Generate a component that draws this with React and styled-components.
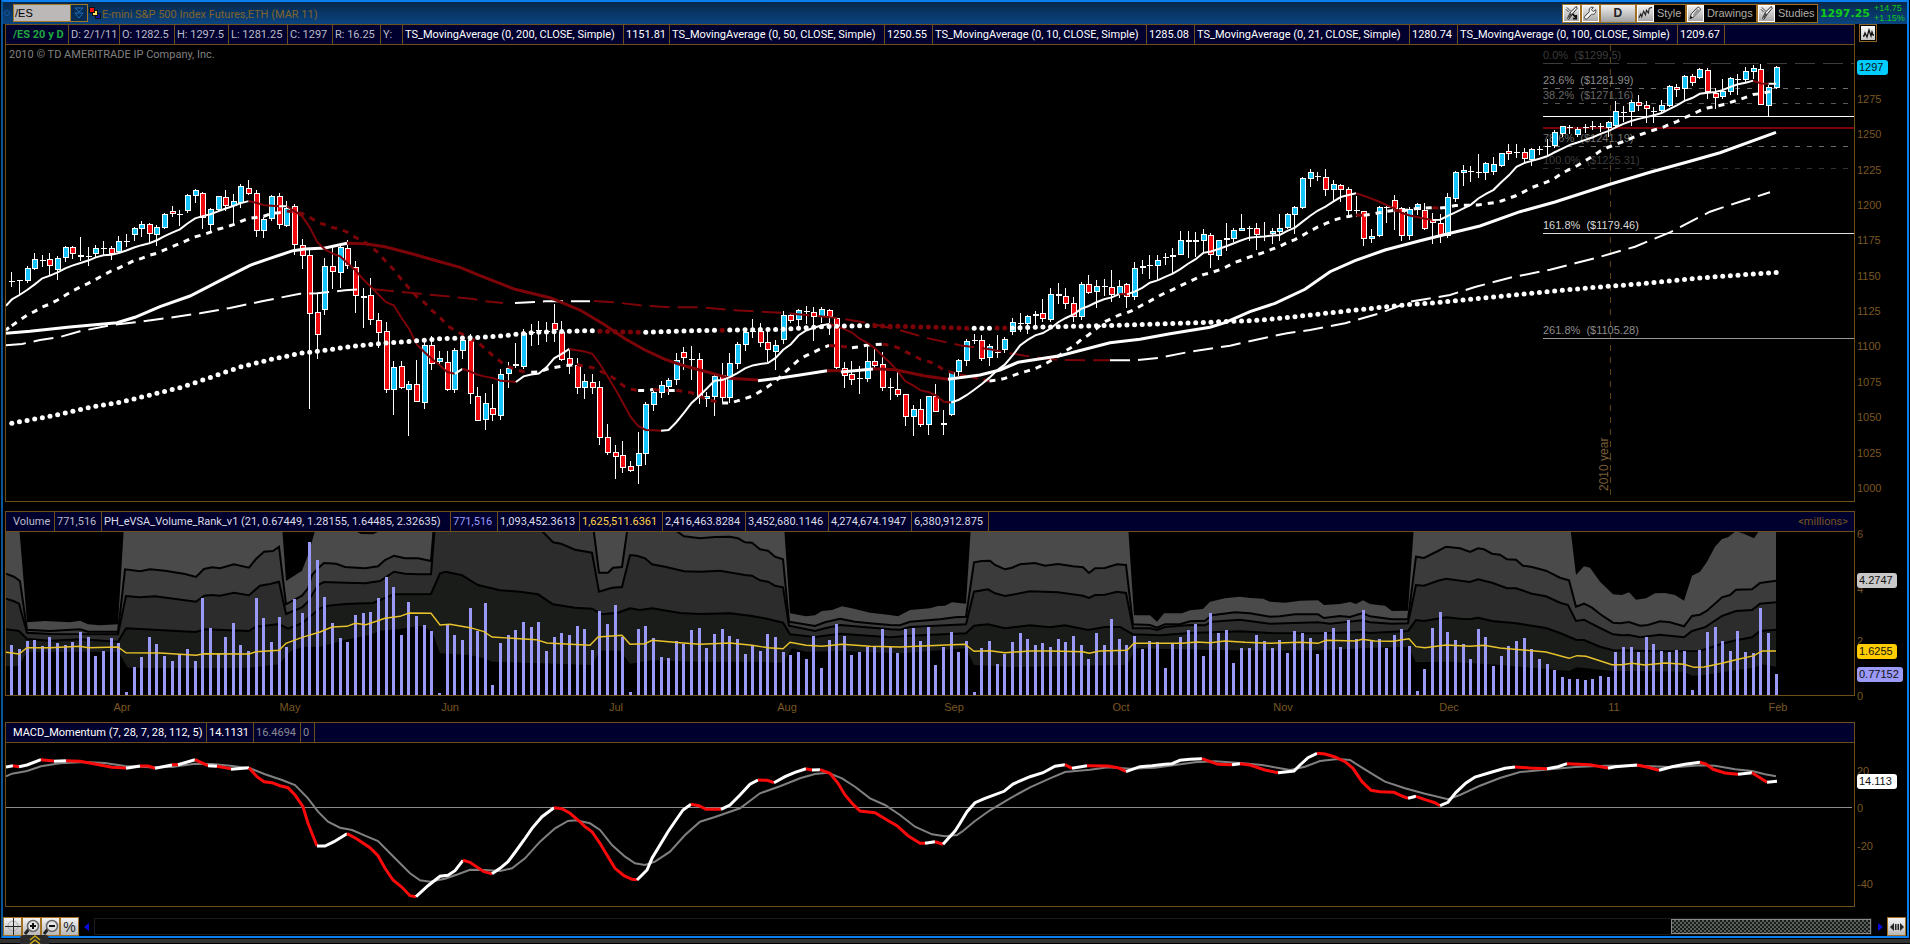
import styled, { createGlobalStyle } from "styled-components";

// bar geometry shared by the three panes
const FIRST_BAR = 11.8;
const BAR_STEP = 7.638;
const barX = (i) => FIRST_BAR + i * BAR_STEP;

// "dir high top bottom low", in thirds of a unit counted from base
const parseCandles = (base, text) =>
  text
    .trim()
    .split(/\s*,\s*/)
    .map((row) => {
      const [dir, ...v] = row.split(" ");
      const [high, top, bottom, low] = v.map((n) => (Number(n) + base) / 3);
      return { up: dir === "u", high, top, bottom, low };
    });

const candles = [
  ...parseCandles(
    480,
    `u 336 362 363 380,u 361 361 363 405,u 318 325 364 370,u 279 297 326 330,u 285 299 301 320,
d 279 298 319 345,u 289 294 331 359,u 258 262 295 306,d 258 262 282 297,d 231 284 291 302,
u 262 287 292 318,u 255 265 283 290,u 243 264 266 284,d 258 265 281 299,u 228 243 275 283,
u 222 244 247 262,u 201 205 224 242,u 183 193 206 231,d 189 193 223 246,u 195 202 224 257,
u 160 163 203 207,d 138 154 162 172,u 151 163 165 197,u 102 106 152 158,u 87 91 107 129,
d 97 100 175 207,u 145 148 194 216,u 108 109 151 156,d 90 112 137 154,u 102 124 137 193,
u 72 79 128 143,d 60 85 101 104,d 91 99 214 230,u 172 176 213 234,u 105 109 176 183,
d 99 109 194 207,u 124 145 199 201,d 133 139 254 285,d 237 255 287 327,d 271 286 461 747,
d 403 457 526 597,u 295 319 451 466,d 261 319 337 387,u 252 261 338 384,d 240 265 318 328,
d 304 321 407 459,u 383 408 415 503,d 354 405 481 494,d 460 481 518 564,d 486 514 689 699,
u 604 622 689 765,d 603 619 683 686,u 662 673 689 828,d 600 673 725 725,u 537 556 728 746,
d 528 556 611 630,u 574 595 607 612,d 574 607 689 693,u 564 571 689 700,u 520 539 572 597,
d 522 541 701 732,d 682 709 782 782`
  ),
  ...parseCandles(
    780,
    `u 398 430 479 510,d 372 445 464 482,u 327 343 467 480,u 306 324 343 384,d 249 311 317 325,
u 208 219 320 327,u 192 217 220 258,u 183 211 214 255,u 186 213 214 247,d 132 190 211 246,
d 183 217 299 303,d 268 295 314 342,d 295 314 383 402,u 341 363 384 417,d 343 366 383 402,
d 364 382 533 555,d 492 532 578 585,d 555 577 591 657,d 543 586 623 639,d 603 619 632 636,
u 516 580 619 672,u 425 431 581 615,u 391 396 434 452,u 362 376 398 414,u 353 359 380 405,
u 279 301 360 375,d 261 277 294 330,u 258 296 298 361,d 280 297 412 431,u 396 409 416 441,
u 344 347 411 467,d 310 344 413 425,u 279 308 413 430,u 247 253 311 326,u 213 217 254 272,
u 177 214 217 234,d 189 213 248 261,d 211 247 271 305,u 241 256 275 330,u 153 166 239 251,
d 159 166 182 188,u 146 150 181 209,d 138 153 156 191,d 141 156 172 243,u 141 148 172 190,
d 146 150 172 224,d 171 175 323 327,d 307 323 347 384,d 303 343 359 375,u 319 353 354 402,
u 253 304 356 366,d 261 304 317 325,d 276 313 383 393,u 355 380 383 420,d 336 386 404 412,
d 401 403 470 498,u 435 447 470 528,d 417 448 494 501,u 407 409 496 525,d 372 409 455 455,
d 450 490 496 525,u 332 337 464 468,u 296 300 337 348,u 237 244 302 318,u 222 239 241 252,
d 225 241 297 303,u 252 258 294 318,u 225 276 279 294`
  ),
  ...parseCandles(
    390,
    `u 621 628 659 668,u 564 577 606 615,u 550 580 583 606,u 555 558 581 612,u 543 553 558 587,
d 507 549 566 575,u 474 493 569 575,d 459 493 498 521,d 474 498 521 536,d 501 520 560 575,
u 457 462 560 570,d 435 461 488 492,u 450 468 487 534,u 447 469 472 498,d 420 472 496 515,
u 450 468 494 504,d 459 462 501 534,u 396 415 500 511,u 390 408 415 431,u 375 406 409 447,
u 375 391 407 450,u 369 382 385 405,u 354 374 382 429,u 303 331 374 375,d 303 331 337 384,
u 306 330 335 382,u 297 312 332 365,d 309 315 376 414,u 329 329 377 391,u 279 324 330 363,
u 294 301 328 336,u 252 295 303 304,u 288 295 297 334,d 279 295 314 360,u 276 317 319 334,
u 294 303 313 342,u 252 294 305 334,u 249 253 295 297,u 228 232 255 312,u 140 145 233 237,
u 117 126 147 171,u 126 137 139 154,d 117 142 179 198,u 150 163 180 214,d 163 166 179 217,
d 172 178 244 258,u 198 241 244 260,d 243 244 328 348,u 297 317 326 340,u 228 232 318 320,
u 229 232 235 279,d 195 210 236 300,d 232 235 318 333,u 231 238 318 330,u 219 223 239 256,
d 219 241 297 300,d 249 270 280 342,d 252 280 318 340,u 190 202 318 325,u 123 125 206 216,
u 105 120 128 168,u 109 124 126 156,u 72 127 130 143,u 96 100 128 150,u 81 102 125 134,
u 69 70 108 111,d 42 64 71 91,u 42 67 69 83,d 54 67 87 99,u 55 58 90 107,
u 48 58 61 76,u 27 49 52 82`
  ),
  ...parseCandles(
    0,
    `u 390 396 439 445,u 377 379 402 411,u 375 382 385 403,u 382 387 404 412,u 373 382 384 400,
u 363 378 382 390,u 370 378 380 396,u 364 367 383 411,u 303 334 379 384,u 318 335 338 366,
u 300 307 336 378,d 285 307 317 333,d 303 316 328 369,u 322 332 335 369,u 300 316 334 340,
u 255 258 317 321,d 252 260 269 291,u 226 229 268 306,d 222 229 250 259,u 205 207 233 237,
d 204 210 276 297,d 264 279 293 327,u 237 273 290 298,u 231 234 275 286,u 222 238 241 286,
u 201 213 241 250,u 195 205 215 238,d 193 208 314 315,u 255 261 318 349,u 198 202 264 268`
  ),
];

const closes = candles.map((c) => (c.up ? c.top : c.bottom));

// lead values stand in for the bars before the visible range
const movingAverage = (length, lead) =>
  closes.map((_, i) => {
    if (i < lead.length) return (lead[i] + 480) / 3;
    const window = closes.slice(i - length + 1, i + 1);
    return window.reduce((a, b) => a + b, 0) / length;
  });

const colourRuns = (values) => {
  const runs = [];
  for (let i = 1; i < values.length; i++) {
    const falling = values[i] > values[i - 1] + 0.05;
    const last = runs[runs.length - 1];
    const point = [barX(i), values[i]];
    if (last && last.falling === falling) last.points.push(point);
    else runs.push({ falling, points: [[barX(i - 1), values[i - 1]], point] });
  }
  return runs;
};

const sma10 = movingAverage(10, [418, 405, 390, 373, 355, 347, 337, 325, 316]);
const sma21 = movingAverage(
  21,
  [497, 481, 466, 454, 441, 432, 420, 406, 392, 381, 370, 358, 345, 333, 324, 313, 302, 295, 286, 280]
);

// x in units, y in thirds
const sma50 = [
  [false, "6,1000 30,994 70,981 117,968 135,952 160,920 190,888 220,842 250,796 270,775 293,752 305,747 325,744 347,730"],
  [true, "347,730 365,731 385,740 410,760 440,785 460,802 480,827 515,868 550,893 580,930 605,975 625,1016 645,1050 665,1078 685,1098 710,1118 730,1135 758,1140"],
  [false, "758,1142 780,1134 800,1125 827,1112"],
  [true, "827,1112 841,1112"],
  [false, "841,1116 873,1107"],
  [true, "873,1106 895,1109 925,1128 948,1138"],
  [false, "948,1138 980,1125 1000,1110 1018,1087 1060,1067 1110,1028 1140,1018 1170,1001 1210,982 1225,968 1250,935 1275,910 1305,868 1330,815 1355,782 1385,750 1420,722 1450,700 1480,678 1520,635 1555,606 1610,553 1650,517 1690,484 1720,458 1776,397"],
];

const sma100 = [
  [false, "6,1036 22,1032 40,1020 60,1011 80,994 110,976 140,965 170,953 200,940 230,924 262,904 300,881 317,880 345,871 363,867"],
  [true, "374,868 420,881 474,897 480,902 503,909"],
  [false, "515,909 530,907 545,904 590,904"],
  [true, "594,903 615,907 640,916 670,922 700,922 730,930 780,938 810,946 840,955 870,970 900,991 930,1016 960,1036 990,1048 1010,1060 1035,1072 1060,1080 1110,1081"],
  [false, "1110,1081 1135,1081 1160,1073 1190,1055 1230,1037 1270,1010 1287,1000 1310,990 1345,970 1380,940 1410,905 1450,885 1475,861 1510,833 1550,809 1575,790 1595,775 1635,740 1670,697 1710,635 1740,605 1770,577"],
];

const sma200 = [
  [11, 1270], [30, 1260], [60, 1243], [90, 1222], [120, 1207], [150, 1185], [180, 1163], [210, 1133],
  [240, 1101], [270, 1079], [300, 1060], [320, 1053], [350, 1040], [385, 1029], [415, 1023], [440, 1016],
  [477, 1013], [505, 1007], [530, 998], [550, 996], [590, 992], [610, 995], [645, 997], [690, 992],
  [780, 988], [830, 979], [865, 977], [900, 979], [974, 985], [1010, 984], [1060, 980], [1130, 975],
  [1180, 970], [1250, 962], [1270, 958], [1310, 945], [1350, 932], [1400, 916], [1440, 907],
  [1500, 889], [1550, 874], [1600, 861], [1650, 849], [1700, 834], [1740, 825], [1778, 817],
];
const fallingSpans = [[596, 642], [718, 726], [870, 971], [992, 1008]];

const interpolate = (points, x) => {
  const k = Math.max(1, points.findIndex((p) => p[0] >= x));
  const [x0, y0] = points[k - 1];
  const [x1, y1] = points[k];
  return y0 + ((y1 - y0) * (x - x0)) / (x1 - x0);
};

const toPath = (text, base, step = 3) =>
  text
    .trim()
    .split(/\s+/)
    .map((pair) => {
      const [x, y] = pair.split(",").map(Number);
      return `${x},${(base + y / step).toFixed(1)}`;
    })
    .join(" ");

const volumes = [
  420, 432, 408, 405, 423, 396, 414, 420, 411, 381, 396, 453, 438, 399, 414, 561, 486, 456, 396, 417, 453, 468,
  447, 432, 468, 279, 369, 447, 396, 354, 420, 438, 279, 339, 411, 336, 426, 282, 324, 111, 165, 276, 354, 399,
  411, 330, 324, 321, 279, 216, 246, 390, 291, 333, 360, 378, 565, 360, 390, 405, 309, 378, 294, 540, 414, 390,
  375, 351, 366, 351, 438, 396, 384, 390, 363, 372, 435, 318, 357, 300, 396, 561, 372, 363, 399, 456, 459, 408,
  417, 375, 369, 429, 387, 372, 393, 402, 447, 423, 438, 387, 396, 441, 450, 441, 462, 393, 489, 405, 357, 393,
  450, 441, 426, 426, 372, 423, 444, 372, 369, 408, 366, 480, 426, 381, 441, 408, 561, 429, 408, 477, 447, 411,
  384, 402, 420, 414, 426, 402, 411, 393, 420, 462, 384, 420, 342, 402, 420, 393, 432, 408, 411, 489, 417, 396,
  375, 357, 453, 324, 384, 375, 474, 429, 429, 390, 408, 429, 405, 444, 378, 384, 399, 447, 381, 369, 426, 345,
  402, 315, 408, 402, 429, 390, 372, 423, 558, 492, 369, 321, 381, 405, 417, 462, 372, 396, 483, 453, 423, 408,
  399, 432, 462, 477, 495, 516, 522, 522, 525, 522, 513, 516, 441, 426, 426, 441, 396, 417, 438, 441, 435, 438,
  555, 435, 381, 366, 408, 438, 378, 441, 444, 309, 384, 507,
];

const bands = [
  {
    fill: "#4a4a4a",
    points:
      "6,60 19,60 27,352 45,348 60,350 70,352 80,347 88,358 100,361 118,358 124,60 282,60 286,228 302,197 308,150 315,78 355,78 361,87 373,88 380,78 784,60 790,325 806,334 815,331 822,318 832,315 842,304 855,312 870,323 890,330 898,334 910,315 930,310 938,303 945,302 952,292 966,296 971,60 1128,60 1134,331 1150,331 1157,350 1164,325 1182,325 1190,316 1203,312 1210,290 1225,280 1240,275 1250,279 1263,281 1270,290 1285,293 1300,287 1318,286 1324,300 1340,297 1350,291 1356,297 1363,286 1370,297 1385,302 1392,318 1408,317 1414,60 1570,60 1576,210 1584,184 1590,188 1600,230 1613,268 1622,270 1629,262 1636,284 1646,280 1655,265 1665,264 1675,270 1684,287 1692,212 1700,200 1707,170 1715,125 1722,102 1728,97 1736,78 1745,88 1754,100 1759,78 1776,60",
  },
  {
    fill: "#3a3b3a",
    line: true,
    points:
      "6,206 14,215 20,228 27,374 50,378 80,373 88,380 118,380 125,193 140,199 150,193 165,197 185,207 196,216 204,192 212,187 220,190 234,178 249,188 256,162 264,140 273,138 279,125 286,298 302,272 308,250 312,210 318,190 324,174 336,176 345,186 365,190 378,184 385,165 394,152 405,160 418,160 431,168 434,60 593,60 599,203 608,203 613,188 622,186 628,60 668,60 684,94 700,100 715,96 730,95 738,100 745,112 752,113 760,133 768,137 775,155 783,163 789,350 815,363 825,352 840,341 855,350 870,355 890,360 900,361 910,350 940,343 955,337 966,335 974,172 982,168 990,167 995,180 1005,193 1012,188 1020,178 1035,174 1045,182 1058,177 1073,184 1083,187 1089,204 1095,190 1105,189 1117,178 1126,180 1133,358 1150,360 1157,368 1165,358 1180,358 1190,349 1205,347 1212,331 1235,322 1250,325 1270,335 1280,334 1295,328 1318,328 1324,339 1340,333 1350,336 1362,325 1370,334 1392,343 1408,343 1416,155 1424,159 1438,138 1446,125 1460,130 1470,141 1478,130 1484,133 1492,146 1500,149 1507,163 1516,164 1523,182 1532,186 1546,197 1560,218 1569,226 1576,305 1584,296 1592,308 1600,327 1613,353 1620,355 1629,351 1640,362 1648,360 1660,349 1670,352 1684,364 1692,333 1700,329 1707,317 1722,277 1730,270 1736,254 1752,253 1760,234 1776,227",
  },
  {
    fill: "#2b2c2b",
    line: true,
    points:
      "6,281 14,289 19,296 27,383 50,387 118,388 126,273 140,277 155,274 170,280 196,290 204,272 212,270 220,272 234,263 249,271 260,242 270,237 279,230 286,327 302,307 308,290 318,240 324,231 345,233 365,235 380,228 394,200 405,206 418,208 431,208 435,60 536,60 543,81 553,112 561,116 575,134 592,143 599,260 612,248 622,246 630,150 637,152 645,160 652,178 665,185 684,199 700,200 720,197 745,210 752,212 760,226 768,230 775,242 783,247 789,362 815,378 825,370 840,360 890,373 900,374 910,366 966,358 974,260 988,253 995,265 1005,273 1015,268 1030,259 1058,262 1083,272 1089,279 1095,270 1105,269 1117,260 1126,264 1133,370 1150,370 1157,375 1165,366 1190,360 1205,361 1212,350 1240,344 1270,356 1318,352 1330,356 1362,346 1370,352 1392,356 1408,355 1416,240 1424,242 1438,227 1446,221 1470,231 1478,223 1492,233 1507,250 1516,250 1532,266 1546,274 1560,293 1568,300 1576,348 1584,344 1600,369 1613,388 1622,391 1629,390 1640,397 1660,389 1684,397 1692,378 1705,367 1722,333 1736,318 1752,315 1760,296 1776,292",
  },
  {
    fill: "#191c19",
    line: true,
    points:
      "6,373 19,378 27,402 50,407 80,403 118,410 126,370 196,381 205,373 249,378 256,365 279,357 288,371 302,355 320,310 328,302 345,297 373,294 394,268 431,267 440,205 446,200 462,211 478,240 500,256 520,260 538,268 553,298 575,308 592,311 602,328 618,323 630,310 640,315 652,310 680,324 700,327 730,325 752,333 768,342 783,353 790,388 815,396 840,386 890,397 910,392 966,385 974,362 988,358 1005,370 1030,361 1050,367 1065,361 1088,375 1105,366 1120,366 1133,388 1160,391 1190,384 1212,382 1240,379 1270,384 1318,385 1340,383 1362,381 1370,384 1408,378 1416,345 1424,348 1446,337 1460,341 1470,343 1478,338 1492,348 1516,355 1546,369 1560,384 1576,404 1584,405 1600,425 1613,436 1660,439 1700,438 1722,416 1736,406 1752,397 1760,378 1776,374",
  },
  {
    fill: "#000",
    points:
      "6,484 19,484 27,440 118,440 128,488 200,490 249,488 279,478 290,440 302,425 320,425 345,405 370,390 380,377 400,372 420,362 432,378 440,445 470,450 484,460 492,470 540,475 592,480 600,437 620,437 630,476 652,466 700,470 750,470 783,473 792,430 806,440 840,438 900,445 966,430 974,480 1010,486 1088,482 1127,480 1136,430 1200,434 1270,437 1320,436 1362,430 1408,425 1416,472 1450,470 1500,480 1546,492 1569,498 1577,487 1612,498 1640,498 1684,500 1692,512 1705,510 1730,498 1754,488 1762,478 1776,485",
  },
];

const volumeAverage =
  "6,442 19,447 27,428 50,428 80,424 88,428 118,426 126,443 160,444 196,451 204,446 249,447 256,440 279,436 286,415 302,397 320,381 332,366 347,364 355,355 366,359 385,340 400,334 409,324 431,325 440,360 450,358 470,368 484,380 492,396 536,404 547,414 590,421 598,396 622,391 630,418 645,416 652,406 680,413 700,418 730,414 752,421 768,428 783,431 790,412 806,421 822,424 842,418 870,424 900,426 940,421 965,418 974,439 990,437 1005,443 1030,438 1050,438 1083,440 1089,445 1100,438 1127,436 1134,415 1182,415 1197,411 1210,413 1225,408 1245,412 1270,415 1300,412 1318,415 1326,406 1356,408 1362,403 1375,408 1393,409 1409,401 1416,425 1425,428 1446,420 1470,424 1484,421 1500,429 1520,434 1546,441 1569,460 1577,452 1586,454 1612,479 1622,479 1632,475 1645,480 1665,474 1684,478 1694,487 1704,486 1722,475 1736,464 1754,452 1762,438 1776,438";

// white while rising, red while falling
const macd = [
  ["w", "6,156 13,152"],
  ["r", "13,152 19,155"],
  ["w", "19,155 27,150 41,134"],
  ["r", "41,134 54,138"],
  ["w", "54,139 66,137"],
  ["r", "66,137 80,139 95,147 112,157 126,159"],
  ["w", "126,160 140,153"],
  ["r", "140,153 148,153 155,160"],
  ["w", "155,160 172,150"],
  ["r", "172,149 178,149"],
  ["w", "178,149 195,134"],
  ["r", "195,134 208,152"],
  ["w", "208,152 217,154"],
  ["r", "217,154 231,161"],
  ["w", "231,163 249,158"],
  ["r", "249,158 257,185 264,200 272,203 280,212 288,218 295,240 303,275 308,325 317,393"],
  ["w", "317,393 325,393 334,380 347,356"],
  ["r", "347,356 357,372 370,398 378,422 385,460 393,495 402,517 410,542 416,545"],
  ["w", "416,545 428,512 440,484 448,481 455,467 463,436"],
  ["r", "463,436 470,442 478,458 484,470 492,476"],
  ["w", "492,476 500,460 508,440 516,408 524,375 532,340 542,305 554,278"],
  ["r", "554,278 562,281 570,295 578,315 585,335 592,350 600,385 608,425 615,460 624,482 632,493 637,494"],
  ["w", "637,495 647,465 652,430 660,390 668,350 676,315 683,285 691,268"],
  ["r", "691,268 699,272 706,283 721,283"],
  ["w", "721,283 730,270 740,240 750,208 758,195"],
  ["r", "758,195 767,196 774,203"],
  ["w", "774,203 785,185 795,172 806,161"],
  ["r", "806,161 812,165"],
  ["w", "812,165 820,164"],
  ["r", "820,164 830,175 838,205 845,240 852,265 860,288 875,293 890,320 897,332 908,362 920,385 925,385"],
  ["w", "925,385 935,380"],
  ["r", "935,380 943,388"],
  ["w", "943,388 955,348 960,325 967,290 975,263 985,250 1004,229 1013,207 1030,185 1043,173 1055,154 1065,149"],
  ["r", "1065,149 1072,160"],
  ["w", "1072,160 1087,152"],
  ["r", "1087,152 1108,153 1118,158 1126,169"],
  ["w", "1126,170 1140,155 1152,152 1165,148 1172,146 1180,136 1190,133 1202,131"],
  ["r", "1202,131 1218,148 1232,149"],
  ["w", "1232,149 1240,146"],
  ["r", "1240,146 1250,150 1265,165 1278,173"],
  ["w", "1278,173 1294,168 1300,150 1308,128 1317,115"],
  ["r", "1317,115 1325,117 1335,126 1345,140 1353,160 1362,200 1371,226 1380,230 1394,232 1402,243 1408,250"],
  ["w", "1408,250 1416,244"],
  ["r", "1416,244 1425,254 1435,263 1440,272"],
  ["w", "1440,272 1448,262 1456,232 1466,204 1475,186 1492,171 1505,160 1515,156"],
  ["r", "1515,156 1530,159 1547,161"],
  ["w", "1547,161 1558,155 1567,146"],
  ["r", "1567,146 1590,149 1608,159"],
  ["w", "1608,160 1615,155 1637,150"],
  ["r", "1637,150 1648,157 1659,166"],
  ["w", "1659,166 1672,155 1685,148 1700,142"],
  ["r", "1700,142 1706,147 1713,163 1725,174 1738,178"],
  ["w", "1738,178 1752,173"],
  ["r", "1752,173 1760,188 1767,202"],
  ["w", "1767,202 1777,199"],
];

const macdSignal =
  "6,184 12,176 27,168 41,154 60,145 85,141 105,144 125,153 150,157 172,156 195,146 212,147 230,152 250,160 265,178 282,195 295,210 308,250 318,290 328,320 340,338 352,345 365,362 378,378 395,430 410,475 420,496 430,500 445,491 458,478 470,464 485,465 500,468 512,460 525,430 540,380 555,340 568,318 576,316 590,325 600,345 612,390 625,425 635,445 645,450 655,440 670,410 685,360 700,320 715,306 740,280 760,235 780,214 800,190 815,177 828,173 842,190 855,215 870,250 885,270 900,300 915,335 932,358 945,364 957,360 962,350 975,318 990,286 1010,250 1030,217 1050,190 1065,171 1090,164 1108,157 1130,161 1155,158 1175,150 1195,142 1215,139 1240,144 1262,150 1290,165 1305,155 1320,138 1338,132 1350,135 1362,158 1375,182 1385,200 1405,220 1425,236 1448,253 1460,240 1480,212 1500,189 1520,171 1545,164 1575,156 1605,152 1640,152 1675,157 1700,151 1715,152 1735,163 1752,168 1765,178 1776,184";

const fibs = [
  { y: 63, text: "0.0%  ($1299.5)", line: "#3c3c3c", label: "#3c3c3c", dash: "20 8" },
  { y: 88, text: "23.6%  ($1281.99)", line: "#6c6c6c", label: "#8c8c8c", dash: "5 7" },
  { y: 103, text: "38.2%  ($1271.16)", line: "#585858", label: "#686868", dash: "5 7" },
  { y: 146, text: "78.6%  ($1241.19)", line: "#6c6c6c", label: "#707070", dash: "5 7" },
  { y: 168, text: "100.0%  ($1225.31)", line: "#343434", label: "#3c3c3c", dash: "5 7" },
  { y: 233, text: "161.8%  ($1179.46)", line: "#e0e0e0", label: "#d8d8d8" },
  { y: 338, text: "261.8%  ($1105.28)", line: "#999", label: "#8c8c8c" },
];

const months = [
  [122, "Apr"], [290, "May"], [450, "Jun"], [616, "Jul"], [787, "Aug"], [954, "Sep"],
  [1121, "Oct"], [1283, "Nov"], [1449, "Dec"], [1614, "11"], [1778, "Feb"],
];

const priceCells = [
  [63, "/ES 20 y D", "#1fa83c", true],
  [51, "D: 2/1/11"],
  [55, "O: 1282.5"],
  [54, "H: 1297.5"],
  [59, "L: 1281.25"],
  [45, "C: 1297"],
  [48, "R: 16.25"],
  [22, "Y:"],
  [221, "TS_MovingAverage (0, 200, CLOSE, Simple)", "#fff"],
  [46, "1151.81", "#fff"],
  [215, "TS_MovingAverage (0, 50, CLOSE, Simple)", "#fff"],
  [48, "1250.55", "#fff"],
  [214, "TS_MovingAverage (0, 10, CLOSE, Simple)", "#fff"],
  [48, "1285.08", "#fff"],
  [215, "TS_MovingAverage (0, 21, CLOSE, Simple)", "#fff"],
  [48, "1280.74", "#fff"],
  [220, "TS_MovingAverage (0, 100, CLOSE, Simple)", "#fff"],
  [47, "1209.67", "#fff"],
];

const volumeCells = [
  [49, "Volume"],
  [47, "771,516"],
  [349, "PH_eVSA_Volume_Rank_v1 (21, 0.67449, 1.28155, 1.64485, 2.32635)", "#dcdce8"],
  [47, "771,516", "#9b9bff"],
  [82, "1,093,452.3613", "#dcdce8"],
  [83, "1,625,511.6361", "#ffd24a"],
  [83, "2,416,463.8284", "#dcdce8"],
  [83, "3,452,680.1146", "#dcdce8"],
  [83, "4,274,674.1947", "#dcdce8"],
  [77, "6,380,912.875", "#dcdce8"],
];

const macdCells = [
  [201, "MACD_Momentum (7, 28, 7, 28, 112, 5)", "#fff"],
  [47, "14.1131", "#fff"],
  [47, "16.4694", "#8a8a94"],
  [14, "0", "#8a8a94"],
];

const WHITE = "#fff";
const DARK_RED = "#7c0408";
const AXIS_TEXT = "#7a5722";

const lineColour = (falling) => (falling ? DARK_RED : WHITE);

const Candle = ({ candle, index }) => {
  const x = Math.floor(barX(index));
  const top = Math.round(candle.top);
  const height = Math.max(1, Math.round(candle.bottom) - top);
  const high = Math.round(candle.high);
  return (
    <g>
      <rect x={x} y={high} width="1" height={Math.max(1, Math.round(candle.low) - high)} fill={WHITE} />
      <rect x={x - 2} y={top} width="6" height={height} fill={WHITE} />
      {height > 2 && (
        <rect x={x - 1} y={top + 1} width="4" height={height - 2} fill={candle.up ? "#14c4fa" : "#f00a0f"} />
      )}
    </g>
  );
};

const PriceChart = () => (
  <Chart $height={456} viewBox="6 45 1848 456" preserveAspectRatio="none" aria-label="Price chart">
    <Copyright x="9" y="58" fill="#808080">
      2010 © TD AMERITRADE IP Company, Inc.
    </Copyright>
    <g shapeRendering="crispEdges">
      <line x1="1610.5" x2="1610.5" y1="45" y2="501" stroke="#5c4418" strokeDasharray="6 6" />
      {fibs.map((f) => (
        <line key={f.y} x1="1543" x2="1854" y1={f.y + 0.5} y2={f.y + 0.5} stroke={f.line} strokeDasharray={f.dash} />
      ))}
      <line x1="1543" x2="1854" y1="116.5" y2="116.5" stroke="#fff" />
      <line x1="1543" x2="1854" y1="128" y2="128" stroke={DARK_RED} strokeWidth="2" />
    </g>
    {fibs.map((f) => (
      <Label key={f.y} x="1543" y={f.y - 4} fill={f.label}>
        {f.text.replace(/ /g, "\u00a0")}
      </Label>
    ))}
    <YearLabel x="1608" y="491" fill="#7a5c38" transform="rotate(-90 1608 491)">
      2010 year
    </YearLabel>
    <g shapeRendering="crispEdges">
      {candles.map((c, i) => (
        <Candle key={i} candle={c} index={i} />
      ))}
    </g>
    <g fill="none">
      {sma100.map(([falling, text]) => (
        <polyline key={text} points={toPath(text, 0)} stroke={lineColour(falling)} strokeWidth="2" strokeDasharray="20 8" />
      ))}
      {colourRuns(sma21).map((run) => (
        <polyline
          key={run.points[0][0]}
          points={run.points.join(" ")}
          stroke={lineColour(run.falling)}
          strokeWidth="3"
          strokeDasharray="6 6"
        />
      ))}
      {sma50.map(([falling, text]) => (
        <polyline key={text} points={toPath(text, 0)} stroke={lineColour(falling)} strokeWidth="3" />
      ))}
      {colourRuns(sma10).map((run) => (
        <polyline key={run.points[0][0]} points={run.points.join(" ")} stroke={lineColour(run.falling)} strokeWidth="2" />
      ))}
      <polyline points="6,305.7 12,299.3" stroke="#fff" strokeWidth="2" />
      <polyline points="6,330 9,327.5" stroke="#fff" strokeWidth="3" />
    </g>
    {candles.map((_, i) => {
      const x = barX(i);
      const falling = fallingSpans.some(([a, b]) => x >= a && x <= b);
      return <circle key={i} cx={x} cy={interpolate(sma200, x) / 3} r="2.5" fill={lineColour(falling)} />;
    })}
  </Chart>
);

const VolumeChart = () => (
  <Chart $height={163} viewBox="6 532 1848 163" preserveAspectRatio="none" aria-label="Volume chart">
    {bands.map((band) => (
      <g key={band.fill}>
        <polygon points={`6,695 ${toPath(band.points, 505)} 1776,695`} fill={band.fill} />
        {band.line && <polyline points={toPath(band.points, 505)} fill="none" stroke="#000" strokeWidth="2" />}
      </g>
    ))}
    <g shapeRendering="crispEdges" fill="#9b99f8">
      {volumes.map((v, i) => {
        const y = Math.round(505 + v / 3);
        return <rect key={i} x={Math.floor(barX(i)) - 1} y={y} width="3" height={695 - y} />;
      })}
    </g>
    <polyline points={toPath(volumeAverage, 505)} fill="none" stroke="#e8c22c" strokeWidth="1.4" />
  </Chart>
);

const MacdChart = () => (
  <Chart $height={163} viewBox="6 743 1848 163" preserveAspectRatio="none" aria-label="MACD chart">
    <line x1="6" x2="1852" y1="807.5" y2="807.5" stroke="#8c8c8c" shapeRendering="crispEdges" />
    <g fill="none">
      <polyline points={toPath(macdSignal, 715)} stroke="#808080" strokeWidth="2" />
      {macd.map(([c, text]) => (
        <polyline key={text} points={toPath(text, 715)} stroke={c === "w" ? "#fff" : "#fa0a0a"} strokeWidth="3" />
      ))}
    </g>
  </Chart>
);

const Axis = ({ top, height, ticks, badges }) => (
  <AxisSvg $height={height} viewBox={`0 ${top} 52 ${height}`}>
    {ticks.map(([y, text]) => (
      <Label key={text} x="2" y={y + 4} fill={AXIS_TEXT}>
        {text}
      </Label>
    ))}
    {badges.map(([y, text, width, fill]) => (
      <g key={text}>
        <rect x="2" y={y - 7} width={width} height="15" rx="3" fill={fill} />
        <Label x="4" y={y + 4} fill="#111">
          {text}
        </Label>
      </g>
    ))}
  </AxisSvg>
);

const Header = ({ cells, note }) => (
  <HeaderBar>
    {cells.map(([width, text, colour, bold], i) => (
      <Cell key={i} $width={width} $colour={colour} $bold={bold} $first={i === 0}>
        {text}
      </Cell>
    ))}
    {note && <Note>{note}</Note>}
  </HeaderBar>
);

const FlaskIcon = ({ arrow }) => (
  <svg width="16" height="16" viewBox="0 0 16 16">
    <path d="M3 2l4 4M2 4l3 3" stroke="#333" strokeWidth="1" />
    <path d="M13 1L7 7l-3 6c-.5 1.500.5 2 1.500 1.500L9 9l5-6z" fill="#eee" stroke="#222" strokeWidth="1" />
    <path d="M7 8L4.500 13l1 .8L8.500 9z" fill="#444" />
    {arrow && <path d="M9 9l4 4M13 10v4H9.500" stroke="#111" strokeWidth="2" fill="none" />}
  </svg>
);

const WrenchIcon = () => (
  <svg width="16" height="16" viewBox="0 0 16 16">
    <path
      d="M13.500 4.500l-2.500 2-2-2 2-2.500c-2-.8-4.500.6-4.500 3.200 0 .6.100 1 .3 1.500L2 11.500c-.8.8-.5 2 .2 2.600s1.700.6 2.400-.2L9.300 9.300c2.700.9 5.200-1.800 4.200-4.800z"
      fill="#f4f4f4"
      stroke="#333"
    />
  </svg>
);

const WaveIcon = () => (
  <svg width="16" height="16" viewBox="0 0 16 16" fill="none">
    <path d="M1 13l2-4 1 3 2-6 2 4 1-5 2 3 1-5 3-1" stroke="#222" strokeWidth="1.200" />
  </svg>
);

const PulseIcon = () => (
  <svg width="13" height="13" viewBox="0 0 13 13" fill="none">
    <path d="M1 9h1l1-3 2 4 2-7 2 6 1-4 1 3h1" stroke="#111" strokeWidth="1.300" />
  </svg>
);

const PencilIcon = () => (
  <svg width="16" height="16" viewBox="0 0 16 16">
    <path d="M2 14l1.500-5L10 2c1-1 4 1 3 3L6.500 12z" fill="#f6f6f6" stroke="#333" />
    <path d="M10 3l3 3-6 6-2-2z" fill="#999" />
    <path d="M2 14l1-3 2 2z" fill="#111" />
  </svg>
);

const ZoomIcon = ({ plus }) => (
  <svg width="16" height="16" viewBox="0 0 16 16" fill="none">
    <path d="M1 15l4-5" stroke="#222" strokeWidth="3" />
    <circle cx="9" cy="7" r="5.500" fill="#e4e4e4" stroke="#666" strokeWidth="1.500" />
    <path d={plus ? "M6 7h6M9 4v6" : "M6 7h6"} stroke="#111" strokeWidth="2" />
  </svg>
);

const CrossIcon = () => (
  <svg width="16" height="17" viewBox="0 0 16 17" fill="none" shapeRendering="crispEdges">
    <circle cx="8" cy="8" r="5" stroke="#aaa" shapeRendering="auto" />
    <path d="M8.500 0v17M0 8.500h16" stroke="#222" />
  </svg>
);

const FitIcon = () => (
  <svg width="14" height="14" viewBox="0 0 14 14">
    <path d="M0 7l4-4v8zM14 7l-4-4v8zM5 4h1v6H5zM6.500 4h1v6h-1zM8 4h1v6H8z" fill="#222" />
  </svg>
);

const App = () => (
  <>
    <GlobalStyle />
    <Page>
      <Frame>
        <TitleBar>
          <LinkDot />
          <SymbolInput aria-label="Symbol" defaultValue="/ES" />
          <DropButton aria-label="Recent symbols">
            <svg width="10" height="12" viewBox="0 0 10 12" fill="none" stroke="#1c6cb8">
              <path d="M1 1h8L5 5zM1 6h8l-4 5z" />
            </svg>
          </DropButton>
          <svg width="14" height="14" viewBox="0 0 14 14" stroke="#111">
            <rect x="7.500" y="7.500" width="5" height="5" fill="#1414a0" />
            <rect x="4.500" y="4.500" width="5" height="5" fill="#ffe060" />
            <rect x="1.500" y="1.500" width="5" height="5" fill="#f01010" />
          </svg>
          <Title>E-mini S&P 500 Index Futures,ETH (MAR 11)</Title>
          <Tools>
            <ToolButton aria-label="Quick studies">
              <IconBox><FlaskIcon arrow /></IconBox>
            </ToolButton>
            <ToolButton aria-label="Settings">
              <IconBox><WrenchIcon /></IconBox>
            </ToolButton>
            <PeriodButton>D</PeriodButton>
            <ToolButton $width={50}>
              <IconBox><WaveIcon /></IconBox>
              Style
            </ToolButton>
            <ToolButton $width={71}>
              <IconBox><PencilIcon /></IconBox>
              Drawings
            </ToolButton>
            <ToolButton $width={61}>
              <IconBox><FlaskIcon /></IconBox>
              Studies
            </ToolButton>
          </Tools>
          <LastPrice>1297.25</LastPrice>
          <Change>
            <span>+14.75</span>
            <span>+1.15%</span>
          </Change>
        </TitleBar>

        <Row>
          <Pane>
            <Header cells={priceCells} />
            <PriceChart />
          </Pane>
          <Side>
            <PulseButton aria-label="Chart mode">
              <PulseIcon />
            </PulseButton>
            <Axis
              top={46}
              height={456}
              ticks={[
                [64, "1300"], [99, "1275"], [134, "1250"], [170, "1225"], [205, "1200"], [240, "1175"], [276, "1150"],
                [311, "1125"], [346, "1100"], [382, "1075"], [417, "1050"], [453, "1025"], [488, "1000"],
              ]}
              badges={[[67, "1297", 31, "#00ccff"]]}
            />
          </Side>
        </Row>

        <Row $gap={9}>
          <Pane>
            <Header cells={volumeCells} note="<millions>" />
            <VolumeChart />
          </Pane>
          <Side>
            <Axis
              top={525}
              height={171}
              ticks={[[534, "6"], [589, "4"], [641, "2"], [696, "0"]]}
              badges={[
                [580, "4.2747", 40, "#c8c8c8"],
                [651, "1.6255", 40, "#ffcc00"],
                [674, "0.77152", 46, "#9c9af8"],
              ]}
            />
          </Side>
        </Row>

        <Row>
          <Dates viewBox="5 696 1850 26" preserveAspectRatio="none">
            {months.map(([x, text]) => (
              <Label key={text} x={x} y="711" textAnchor="middle" fill={AXIS_TEXT}>
                {text}
              </Label>
            ))}
          </Dates>
        </Row>

        <Row>
          <Pane>
            <Header cells={macdCells} />
            <MacdChart />
          </Pane>
          <Side>
            <Axis
              top={736}
              height={171}
              ticks={[[771, "20"], [808, "0"], [846, "-20"], [884, "-40"]]}
              badges={[[781, "14.113", 40, "#fff"]]}
            />
          </Side>
        </Row>

        <BottomBar>
          <SmallButton aria-label="Crosshair"><CrossIcon /></SmallButton>
          <SmallButton aria-label="Zoom in"><ZoomIcon plus /></SmallButton>
          <SmallButton aria-label="Zoom out"><ZoomIcon /></SmallButton>
          <SmallButton>%</SmallButton>
          <ArrowButton aria-label="Scroll left">
            <svg width="6" height="8" viewBox="0 0 6 8"><path d="M5 0v8L0 4z" fill="#0a0ae0" /></svg>
          </ArrowButton>
          <Scroll type="range" min="0" max="100" defaultValue="100" aria-label="Scroll chart" />
          <ArrowButton aria-label="Scroll right">
            <svg width="6" height="8" viewBox="0 0 6 8"><path d="M1 0v8l5-4z" fill="#0a0ae0" /></svg>
          </ArrowButton>
          <SmallButton aria-label="Fit"><FitIcon /></SmallButton>
        </BottomBar>
      </Frame>
      <Shelf>
        <Tab aria-label="Expand">
          <svg width="12" height="9" viewBox="0 0 12 9" fill="none" stroke="#c8a81c" strokeWidth="1.500">
            <path d="M1 5l5-4 5 4M1 9l5-4 5 4" />
          </svg>
        </Tab>
      </Shelf>
    </Page>
  </>
);

const GlobalStyle = createGlobalStyle`
  * {
    box-sizing: border-box;
  }
  body {
    margin: 0;
    background: #000;
    font-family: "Liberation Sans", Arial, sans-serif;
    font-size: 11px;
  }
  button, input {
    font: inherit;
    margin: 0;
  }
`;

const Page = styled.div`
  min-height: 100vh;
  overflow: hidden;
  background: #000;
`;

const Frame = styled.main`
  margin: 0 1px;
  border: 2px solid #0a80f0;
  border-left-color: #08559c;
`;

const TitleBar = styled.header`
  display: flex;
  align-items: center;
  height: 22px;
  background: linear-gradient(#06284c, #0a4480);
`;

const LinkDot = styled.span`
  width: 6px;
  height: 6px;
  margin: 0 3px 0 1px;
  border: 1px solid #1458a8;
  border-radius: 50%;
`;

const SymbolInput = styled.input`
  width: 58px;
  height: 18px;
  padding: 0 1px;
  border: 1px solid #a07828;
  border-radius: 0;
  background: #bcb8b8;
  color: #000;
  font-size: 11px;
`;

const DropButton = styled.button`
  display: flex;
  align-items: center;
  justify-content: center;
  width: 17px;
  height: 18px;
  padding: 0;
  border: 1px solid #a07828;
  border-left: 0;
  background: #062c54;
`;

const Title = styled.h1`
  flex: 1;
  margin: 0;
  padding-top: 2px;
  color: #80642c;
  font-family: Roboto, sans-serif;
  font-size: 11px;
  font-weight: 400;
  white-space: nowrap;
`;

const Tools = styled.div`
  display: flex;
`;

const ToolButton = styled.button`
  display: flex;
  align-items: center;
  gap: 3px;
  width: ${(p) => p.$width || 19}px;
  height: 19px;
  padding: 0;
  border: 1px solid #a07020;
  background: #000;
  color: #b0aca4;
  font-size: 11px;
  white-space: nowrap;
`;

const IconBox = styled.span`
  display: flex;
  flex: none;
  align-items: center;
  justify-content: center;
  width: 17px;
  height: 17px;
  border: 1px solid #fff;
  background: linear-gradient(#f0f0f0, #a8a8a8);
`;

const PeriodButton = styled.button`
  width: 36px;
  height: 19px;
  padding: 0;
  border: 1px solid #a07020;
  background: linear-gradient(#f0f0f0, #a0a0a0);
  color: #222;
  font-size: 12px;
  font-weight: 700;
`;

const LastPrice = styled.strong`
  padding: 0 4px 0 2px;
  color: #10c818;
  font-family: "DejaVu Sans", sans-serif;
  font-size: 11px;
`;

const Change = styled.div`
  display: flex;
  flex-direction: column;
  width: 33px;
  color: #10c818;
  font-size: 9px;
  line-height: 10px;
`;

const Row = styled.div`
  display: flex;
  margin-top: ${(p) => p.$gap || 0}px;
  padding-left: 2px;
`;

const Pane = styled.section`
  flex: 1;
  min-width: 0;
  border: 1px solid #6e4f1c;
`;

const Side = styled.aside`
  display: flex;
  flex-direction: column;
  justify-content: flex-end;
  align-items: flex-start;
  width: 52px;
`;

const HeaderBar = styled.div`
  display: flex;
  height: 20px;
  overflow: hidden;
  border-bottom: 1px solid #6e4f1c;
  background: #00002e;
  font-family: Roboto, sans-serif;
`;

const Cell = styled.span`
  flex: none;
  width: ${(p) => p.$width}px;
  padding-left: ${(p) => (p.$first ? 7 : 2)}px;
  border-right: 1px solid #6e4f1c;
  color: ${(p) => p.$colour || "#bcbcc8"};
  font-weight: ${(p) => (p.$bold ? 700 : 400)};
  line-height: 19px;
  white-space: nowrap;
`;

const Note = styled.span`
  margin-left: auto;
  padding-right: 6px;
  color: #7a5722;
  line-height: 19px;
`;

const Chart = styled.svg`
  display: block;
  width: 100%;
  height: ${(p) => p.$height}px;
`;

const Label = styled.text`
  font-family: "Liberation Sans", Arial, sans-serif;
  font-size: 11px;
`;

const Copyright = styled(Label)`
  font-family: Roboto, sans-serif;
`;

const YearLabel = styled(Label)`
  font-size: 12px;
`;

const AxisSvg = styled.svg`
  display: block;
  width: 52px;
  height: ${(p) => p.$height}px;
  overflow: visible;
`;

const Dates = styled.svg`
  display: block;
  flex: 1;
  height: 26px;
  margin-right: 52px;
`;

const PulseButton = styled.button`
  display: flex;
  align-items: center;
  justify-content: center;
  width: 18px;
  height: 18px;
  margin: 0 0 auto 4px;
  padding: 0;
  border: 1px solid #8c6420;
  outline: 1px solid #000;
  outline-offset: -2px;
  background: linear-gradient(#fff, #c0c0c0);
`;

const BottomBar = styled.div`
  display: flex;
  align-items: center;
  height: 19px;
  margin-top: 10px;
  padding: 0 1px 0 0;
`;

const SmallButton = styled.button`
  display: flex;
  align-items: center;
  justify-content: center;
  width: 19px;
  height: 19px;
  padding: 0;
  border: 1px solid #a07020;
  background: linear-gradient(#f4f4f4, #b8b8b8);
  color: #222;
  font-size: 14px;
  font-weight: 400;
`;

const ArrowButton = styled.button`
  display: flex;
  align-items: center;
  justify-content: center;
  width: 15px;
  height: 19px;
  padding: 0;
  border: 0;
  background: #000;
`;

const Scroll = styled.input`
  flex: 1;
  height: 17px;
  border: 1px solid #1a1a1a;
  background: #000;
  appearance: none;

  &::-webkit-slider-thumb {
    appearance: none;
    width: 200px;
    height: 15px;
    border: 1px solid #8a8a8a;
    background: repeating-conic-gradient(#5c605c 0 25%, #181c18 0 50%) 0 0 / 4px 4px;
  }
`;

const Shelf = styled.footer`
  display: flex;
  height: 4px;
  margin-top: 1px;
  padding-left: 20px;
  background: #333;
`;

const Tab = styled.button`
  display: flex;
  justify-content: center;
  width: 29px;
  height: 9px;
  margin-top: -4px;
  padding: 0;
  border: 0;
  border-radius: 4px 4px 0 0;
  background: #2a2a2a;
  z-index: 1;
`;

export default App;
